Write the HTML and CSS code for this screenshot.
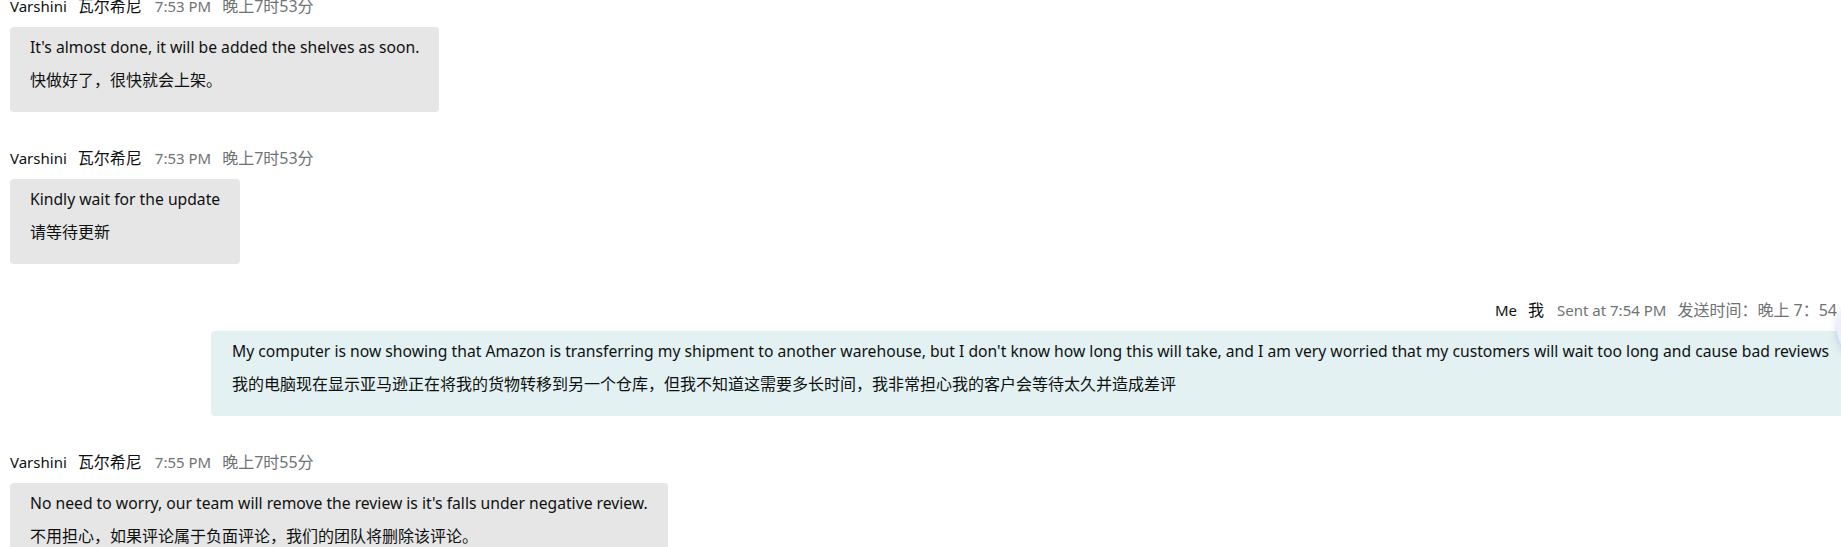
FILE: index.html
```html
<!DOCTYPE html>
<html lang="zh-CN">
<head>
    <meta charset="UTF-8">
    <meta name="viewport" content="width=device-width, initial-scale=1.0">
    <title>Messages</title>
    <link rel="stylesheet" href="styles.css">
</head>
<body>

    <div class="thread">
        <div class="msg">
            <div class="meta">
                <span class="name">Varshini</span><span class="name zh">瓦尔希尼</span>
                <span class="time">7:53 PM</span><span class="time zh">晚上7时53分</span>
            </div>
            <div class="bubble">
                <p>It's almost done, it will be added the shelves as soon.</p>
                <p class="zh">快做好了，很快就会上架。</p>
            </div>
        </div>

        <div class="msg">
            <div class="meta">
                <span class="name">Varshini</span><span class="name zh">瓦尔希尼</span>
                <span class="time">7:53 PM</span><span class="time zh">晚上7时53分</span>
            </div>
            <div class="bubble">
                <p>Kindly wait for the update</p>
                <p class="zh">请等待更新</p>
            </div>
        </div>

        <div class="msg out">
            <div class="meta">
                <span class="name">Me</span><span class="name zh">我</span>
                <span class="time">Sent at 7:54 PM</span><span class="time zh">发送时间：晚上 7：54</span>
            </div>
            <div class="bubble">
                <p>My computer is now showing that Amazon is transferring my shipment to another warehouse, but I don't know how long this will take, and I am very worried that my customers will wait too long and cause bad reviews</p>
                <p class="zh">我的电脑现在显示亚马逊正在将我的货物转移到另一个仓库，但我不知道这需要多长时间，我非常担心我的客户会等待太久并造成差评</p>
            </div>
        </div>

        <div class="msg">
            <div class="meta">
                <span class="name">Varshini</span><span class="name zh">瓦尔希尼</span>
                <span class="time">7:55 PM</span><span class="time zh">晚上7时55分</span>
            </div>
            <div class="bubble">
                <p>No need to worry, our team will remove the review is it's falls under negative review.</p>
                <p class="zh">不用担心，如果评论属于负面评论，我们的团队将删除该评论。</p>
            </div>
        </div>
    </div>

    <!-- floating helper button, mostly off screen -->
    <div class="fab"></div>

</body>
</html>
```

FILE: styles.css
```css
body {
    font-family: 'Noto Sans', 'Noto Sans CJK SC', sans-serif;
    margin: 0;
    padding: 0;
    background-color: #fff;
    color: #0f1111;
    overflow: hidden;
    height: 547px;
    position: relative;
}

.thread {
    margin-top: -4px;
    padding-left: 10px;
    padding-right: 4px;
    display: flex;
    flex-direction: column;
}

.msg {
    display: flex;
    flex-direction: column;
    align-items: flex-start;
    margin-bottom: 36px;
}

.meta {
    display: flex;
    align-items: baseline;
    gap: 11px;
    height: 20px;
    font-size: 15px;
    line-height: 20px;
    margin-bottom: 11px;
    white-space: nowrap;
}

.meta .zh {
    font-size: 16px;
}

.meta .name {
    color: #0f1111;
}

.meta .name + .time {
    margin-left: 2px;
}

.meta .time {
    color: #6f7373;
}

.bubble {
    background-color: #e6e6e6;
    border-radius: 4px;
    padding: 9px 20px 12px;
    font-size: 15.7px;
    line-height: 22px;
}

.bubble p {
    margin: 0 0 10px;
    white-space: nowrap;
}

.bubble p.zh {
    font-family: 'Noto Sans CJK SC', 'Noto Sans', sans-serif;
    font-size: 16px;
}

/* messages I sent sit on the right */
.msg.out {
    align-items: flex-end;
}

.msg.out .bubble {
    background-color: #e3f1f2;
    padding-left: 21px;
    margin-right: -12px;
}

.fab {
    position: absolute;
    top: 298px;
    right: -58px;
    width: 62px;
    height: 62px;
    border-radius: 50%;
    background: linear-gradient(135deg, #eef1ff, #dfe5fb);
    box-shadow: 0 2px 8px rgba(60, 80, 160, 0.25);
}
```
